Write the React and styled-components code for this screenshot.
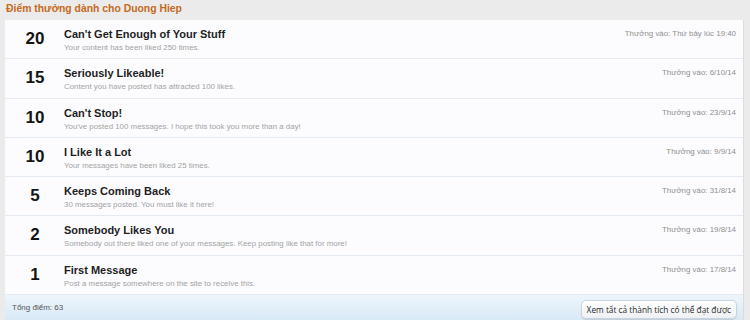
import React from 'react';
import styled, { createGlobalStyle } from 'styled-components';

const GlobalStyle = createGlobalStyle`
  html, body {
    margin: 0;
    padding: 0;
    background: #ebebeb;
  }
  body {
    font-family: "Liberation Sans", Arial, sans-serif;
  }
`;

const trophies = [
  { points: 20, title: "Can't Get Enough of Your Stuff", text: 'Your content has been liked 250 times.', date: 'Thưởng vào: Thứ bảy lúc 19:40' },
  { points: 15, title: 'Seriously Likeable!', text: 'Content you have posted has attracted 100 likes.', date: 'Thưởng vào: 6/10/14' },
  { points: 10, title: "Can't Stop!", text: "You've posted 100 messages. I hope this took you more than a day!", date: 'Thưởng vào: 23/9/14' },
  { points: 10, title: 'I Like It a Lot', text: 'Your messages have been liked 25 times.', date: 'Thưởng vào: 9/9/14' },
  { points: 5, title: 'Keeps Coming Back', text: '30 messages posted. You must like it here!', date: 'Thưởng vào: 31/8/14' },
  { points: 2, title: 'Somebody Likes You', text: 'Somebody out there liked one of your messages. Keep posting like that for more!', date: 'Thưởng vào: 19/8/14' },
  { points: 1, title: 'First Message', text: 'Post a message somewhere on the site to receive this.', date: 'Thưởng vào: 17/8/14' },
];

const Page = styled.div`
  padding: 0 6px 0 5px;
  height: 320px;
  overflow: hidden;
`;

const Heading = styled.h3`
  margin: 0;
  height: 20px;
  line-height: 17px;
  font-size: 10.4px;
  font-weight: bold;
  color: #c46a22;
  padding-left: 1px;
`;

const Panel = styled.div`
  background: #fcfcfe;
  border-right: 1px solid #dcdcdc;
`;

const List = styled.ol`
  list-style: none;
  margin: 0;
  padding: 0;
`;

const Row = styled.li`
  display: flex;
  align-items: flex-start;
  height: 39.3px;
  box-sizing: border-box;
  border-bottom: 1px solid #e3eaf2;
  padding-right: 7px;
`;

const Points = styled.div`
  flex: none;
  width: 59px;
  box-sizing: border-box;
  padding-top: 9px;
  padding-left: 1px;
  text-align: center;
  font-size: 17px;
  font-weight: bold;
  color: #141414;
`;

const Info = styled.div`
  flex: 1;
  padding-top: 7px;
`;

const Title = styled.div`
  font-size: 11px;
  font-weight: bold;
  color: #1e1e1e;
  line-height: 15px;
`;

const Desc = styled.div`
  font-size: 7.9px;
  color: #a3a3a3;
  line-height: 12px;
`;

const Date = styled.div`
  font-size: 7.9px;
  color: #8f8f8f;
  padding-top: 9px;
  white-space: nowrap;
`;

const Footer = styled.div`
  display: flex;
  align-items: center;
  justify-content: space-between;
  height: 25px;
  padding: 0 6px 0 7px;
  background: linear-gradient(to bottom, #eef5fb, #d8e9f6);
`;

const Total = styled.span`
  font-size: 8px;
  color: #555;
`;

const Button = styled.button`
  font-family: "Open Sans", "Liberation Sans", sans-serif;
  font-size: 8.3px;
  color: #2a2a2a;
  background: linear-gradient(to bottom, #ffffff, #eef0f3);
  border: 1px solid #c9d3de;
  border-radius: 5px;
  height: 19px;
  padding: 0 5px;
  margin-top: 3px;
  box-shadow: 0 1px 1px rgba(0, 0, 0, 0.12);
`;

export default function App() {
  return (
    <Page>
      <GlobalStyle />
      <Heading>Điểm thưởng dành cho Duong Hiep</Heading>
      <Panel>
        <List>
          {trophies.map((t, i) => (
            <Row key={i}>
              <Points>{t.points}</Points>
              <Info>
                <Title>{t.title}</Title>
                <Desc>{t.text}</Desc>
              </Info>
              <Date>{t.date}</Date>
            </Row>
          ))}
        </List>
        <Footer>
          <Total>Tổng điểm: 63</Total>
          <Button>Xem tất cả thành tích có thể đạt được</Button>
        </Footer>
      </Panel>
    </Page>
  );
}
